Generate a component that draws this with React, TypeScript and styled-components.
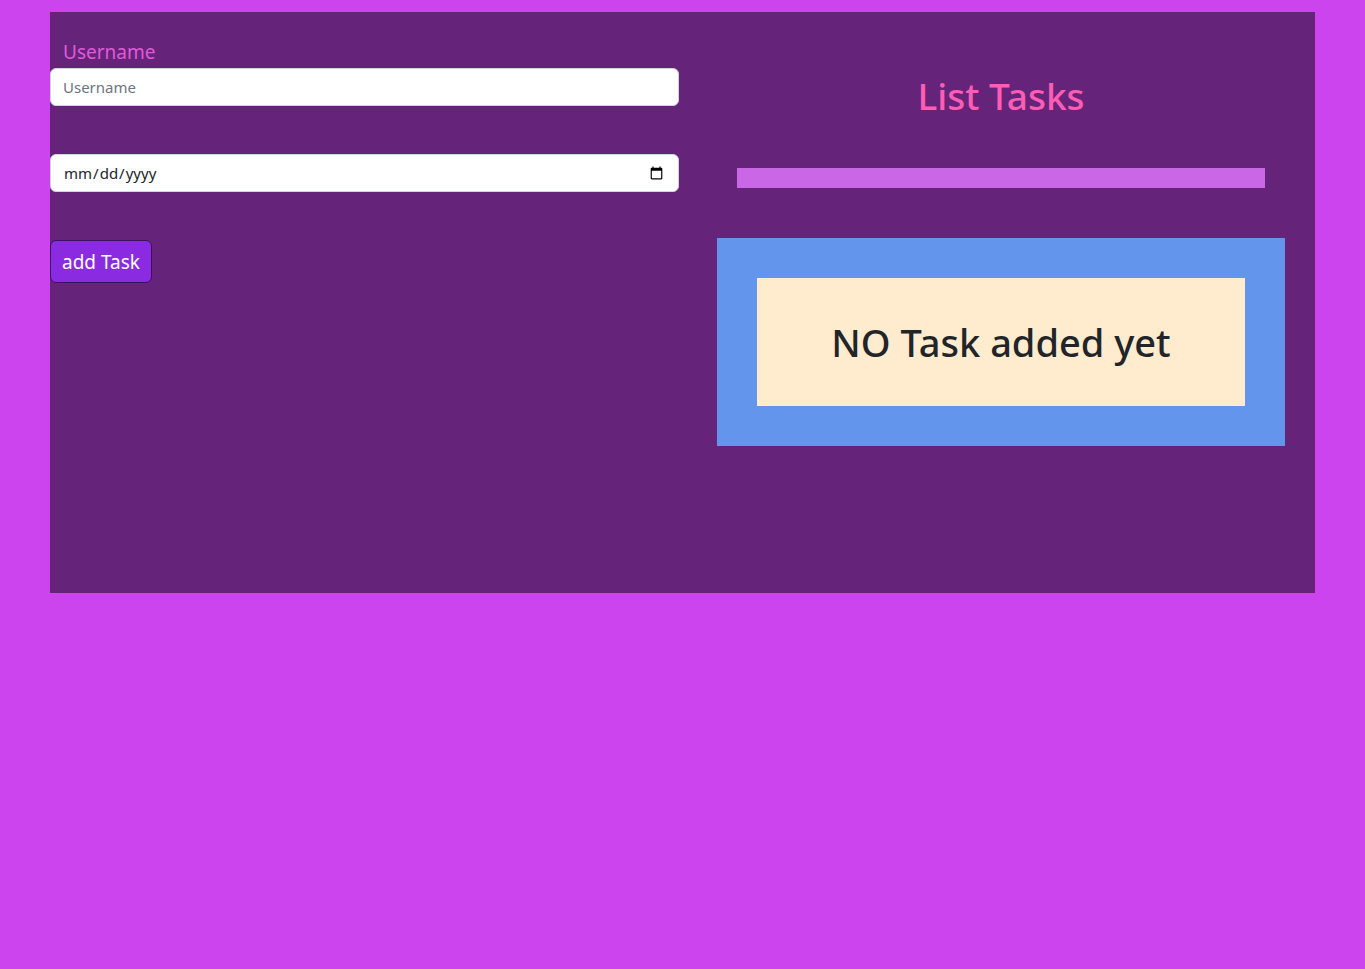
import React from "react";
import styled, { createGlobalStyle } from "styled-components";

const Global = createGlobalStyle`
  html, body { margin: 0; padding: 0; }
  body {
    background: #cc44ee;
    font-family: "Noto Sans", "Open Sans", sans-serif;
    color: #212529;
  }
  * { box-sizing: border-box; }
`;

const Page = styled.div`
  padding: 12px 50px 0;
`;

const Panel = styled.main`
  background: #652379;
  min-height: 581px;
  display: grid;
  grid-template-columns: 629px 1fr;
  column-gap: 8px;
  align-items: start;
`;

const FormCol = styled.form`
  display: flex;
  flex-direction: column;
  align-items: flex-start;
  padding-top: 28px;
`;

const Label = styled.label`
  color: #e05ad8;
  font-size: 19px;
  line-height: 24px;
  margin-left: 13px;
  margin-bottom: 4px;
`;

const Input = styled.input<{ $gap?: number }>`
  width: 100%;
  height: 38px;
  padding: 6px 12px;
  font-family: inherit;
  font-size: 15px;
  color: #212529;
  background: #fff;
  border: 1px solid #ced4da;
  border-radius: 6px;
  margin: 0 0 ${(p) => p.$gap ?? 0}px;
  &::placeholder { color: #6c757d; }
`;

const Button = styled.button`
  height: 43px;
  padding: 0 11px;
  font-family: inherit;
  font-size: 19px;
  color: #fff;
  background: #8a2be2;
  border: 1px solid #3a1060;
  border-radius: 6px;
`;

const ListCol = styled.section`
  display: flex;
  flex-direction: column;
  align-items: center;
  padding-top: 56px;
`;

const Title = styled.h1`
  margin: 0;
  font-size: 37px;
  font-weight: 500;
  line-height: 56px;
  color: #ff5cb4;
`;

const Bar = styled.div`
  width: 528px;
  height: 20px;
  background: #c967e6;
  margin-top: 44px;
`;

const EmptyBox = styled.div`
  width: 568px;
  margin-top: 50px;
  padding: 40px;
  background: #6495ed;
`;

const EmptyInner = styled.div`
  height: 128px;
  background: #ffebcd;
  display: flex;
  align-items: center;
  justify-content: center;
  font-size: 38px;
  font-weight: 500;
  color: #212529;
`;

export default function App() {
  return (
    <>
      <Global />
      <Page>
        <Panel>
          <FormCol onSubmit={(e) => e.preventDefault()}>
            <Label htmlFor="username">Username</Label>
            <Input id="username" type="text" placeholder="Username" $gap={48} />
            <Input type="date" $gap={48} />
            <Button type="submit">add Task</Button>
          </FormCol>
          <ListCol>
            <Title>List Tasks</Title>
            <Bar />
            <EmptyBox>
              <EmptyInner>NO Task added yet</EmptyInner>
            </EmptyBox>
          </ListCol>
        </Panel>
      </Page>
    </>
  );
}
